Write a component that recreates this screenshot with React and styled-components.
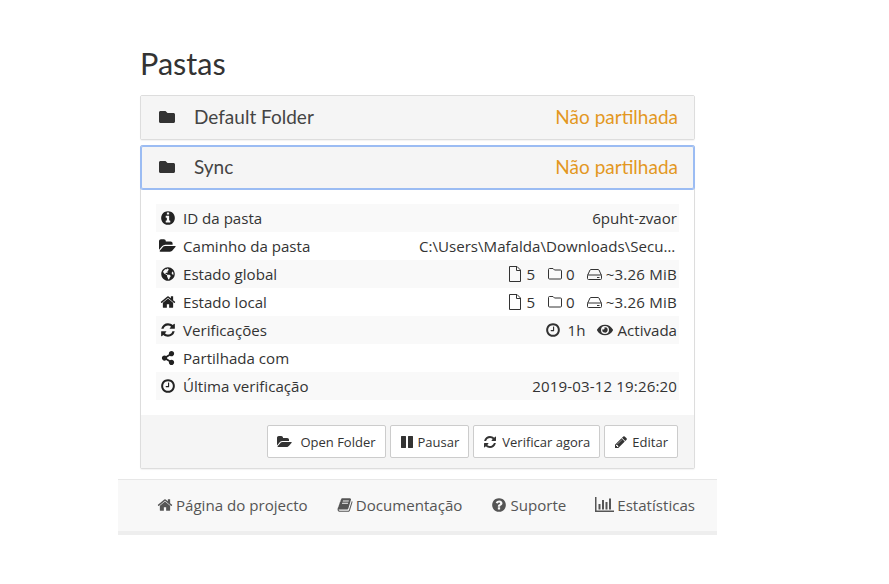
import React from "react";
import styled, { createGlobalStyle } from "styled-components";
import { FaFolder, FaGlobeAmericas, FaShareAlt, FaEye } from "react-icons/fa";

const Global = createGlobalStyle`
  html, body { margin: 0; padding: 0; background: #fff; }
  body { font-family: "Open Sans", "Noto Sans", sans-serif; color: #333; }
`;

const Page = styled.div`
  width: 599px;
  margin-left: 118px;
  padding-top: 46px;
`;
const Content = styled.div`
  padding: 0 22px 10px;
`;
const Title = styled.h1`
  margin: 0 0 13px;
  height: 36px;
  font: 400 30.6px/36px Lato, sans-serif;
  color: #333;
`;
const Panel = styled.section`
  border: 1px solid #ddd;
  border-radius: 2px;
  margin-bottom: 5px;
  box-shadow: 0 1px 1px rgba(0,0,0,.05);
  background: #fff;
  &:last-child { margin-bottom: 0; }
`;
const PanelHead = styled.div`
  display: flex;
  align-items: center;
  height: 43px;
  padding: 0 16px 2px 17px;
  box-sizing: border-box;
  background: #f5f5f5;
  border-radius: 2px;
  ${p => p.$open && "box-shadow: 0 0 0 1px #9bbcf3, inset 0 0 0 1px #9bbcf3;"}
`;
const FolderIcon = styled(FaFolder)`
  width: 18px;
  height: 16px;
  color: #333;
  margin-right: 18px;
  flex: none;
`;
const FolderName = styled.span`
  flex: 1;
  font: 400 19px Lato, sans-serif;
  color: #444;
`;
const Status = styled.span`
  font: 400 19px Lato, sans-serif;
  color: #e3981f;
`;
const PanelBody = styled.div`
  padding: 15px;
`;
const Row = styled.div`
  display: flex;
  align-items: center;
  justify-content: space-between;
  height: 28px;
  padding: 0 2px 0 3px;
  font-size: 15.1px;
  color: #333;
  background: ${p => (p.$odd ? "#f9f9f9" : "#fff")};
`;
const RowLabel = styled.span`
  display: flex;
  align-items: center;
  flex: none;
  white-space: nowrap;
`;
const RowIcon = styled.span`
  display: inline-flex;
  justify-content: center;
  width: 17px;
  margin-right: 7px;
  font-size: ${p => p.$small ? 14 : 16}px;
  color: #222;
`;
const RowValue = styled.span`
  display: flex;
  align-items: center;
  justify-content: flex-end;
  min-width: 0;
  white-space: nowrap;
  letter-spacing: ${p => p.$spaced ? "0.12px" : "0"};
`;
const Path = styled.span`
  display: block;
  width: 258px;
  overflow: hidden;
  text-overflow: ellipsis;
  white-space: nowrap;
`;
const Stat = styled.span`
  display: inline-flex;
  align-items: center;
  gap: ${p => p.$gap || 4}px;
  margin-left: ${p => p.$ml || 0}px;
  letter-spacing: ${p => p.$track || 0}px;
  svg { font-size: 16px; color: #333; flex: none; }
`;
const PanelFoot = styled.div`
  display: flex;
  justify-content: flex-end;
  gap: 4px;
  padding: 10px 16px 10px;
  background: #f5f5f5;
`;
const Button = styled.button`
  display: inline-flex;
  align-items: center;
  gap: ${p => p.$gap || 4}px;
  height: 33px;
  padding: 0 9px;
  background: #fff;
  border: 1px solid #ccc;
  border-radius: 2px;
  font-family: inherit;
  font-size: 13px;
  color: #333;
  svg { font-size: 14px; flex: none; }
`;
const Footer = styled.footer`
  display: flex;
  justify-content: flex-end;
  gap: 29px;
  align-items: center;
  height: 51px;
  padding: 0 22px 2px;
  box-sizing: content-box;
  height: 49px;
  background: #f8f8f8;
  border-top: 1px solid #e7e7e7;
  border-bottom: 4px solid #eee;
`;
const FootLink = styled.a`
  display: inline-flex;
  align-items: center;
  gap: 3px;
  font-size: 15.1px;
  color: #555;
  svg { font-size: 16px; flex: none; }
`;

const fa4 = {
  info: "M1152 1376v-160q0-14-9-23t-23-9h-96v-512q0-14-9-23t-23-9h-320q-14 0-23 9t-9 23v160q0 14 9 23t23 9h96v320h-96q-14 0-23 9t-9 23v160q0 14 9 23t23 9h448q14 0 23-9t9-23zm-128-896v-160q0-14-9-23t-23-9h-192q-14 0-23 9t-9 23v160q0 14 9 23t23 9h192q14 0 23-9t9-23zm640 416q0 209-103 385.5t-279.5 279.5-385.5 103-385.5-103-279.5-279.5-103-385.5 103-385.5 279.5-279.5 385.5-103 385.5 103 279.5 279.5 103 385.5z",
  open: "M1879 952q0 31-31 66l-336 396q-43 51-120.5 86.5t-143.5 35.5h-1088q-34 0-60.5-13t-26.5-43q0-31 31-66l336-396q43-51 120.5-86.5t143.5-35.5h1088q34 0 60.5 13t26.5 43zm-343-344v160h-832q-94 0-197 47.5t-164 119.5l-337 396-5 6q0-4-.5-12.5t-.5-12.5v-960q0-92 66-158t158-66h320q92 0 158 66t66 158v32h544q92 0 158 66t66 158z",
  home: "M1472 992v480q0 26-19 45t-45 19h-384v-384h-256v384h-384q-26 0-45-19t-19-45v-480q0-1 .5-3t.5-3l575-474 575 474q1 2 1 6zm223-69l-62 74q-8 9-21 11h-3q-13 0-21-7l-692-577-692 577q-12 8-24 7-13-2-21-11l-62-74q-8-10-7-23.5t11-21.5l719-599q32-26 76-26t76 26l244 204v-195q0-14 9-23t23-9h192q14 0 23 9t9 23v408l219 182q10 8 11 21.5t-7 23.5z",
  refresh: "M1639 1056q0 5-1 7-64 268-268 434.5t-478 166.5q-146 0-282.5-55t-243.5-157l-129 129q-19 19-45 19t-45-19-19-45v-448q0-26 19-45t45-19h448q26 0 45 19t19 45-19 45l-137 137q71 66 161 102t187 36q134 0 250-65t186-179q11-17 53-117 8-23 30-23h192q13 0 22.5 9.5t9.5 22.5zm25-800v448q0 26-19 45t-45 19h-448q-26 0-45-19t-19-45 19-45l138-138q-148-137-349-137-134 0-250 65t-186 179q-11 17-53 117-8 23-30 23h-199q-13 0-22.5-9.5t-9.5-22.5v-7q65-268 270-434.5t480-166.5q146 0 284 55.5t245 156.5l130-129q19-19 45-19t45 19 19 45z",
  clock: "M1024 544v448q0 14-9 23t-23 9h-320q-14 0-23-9t-9-23v-64q0-14 9-23t23-9h224v-352q0-14 9-23t23-9h64q14 0 23 9t9 23zm416 352q0-148-73-273t-198-198-273-73-273 73-198 198-73 273 73 273 198 198 273 73 273-73 198-198 73-273zm224 0q0 209-103 385.5t-279.5 279.5-385.5 103-385.5-103-279.5-279.5-103-385.5 103-385.5 279.5-279.5 385.5-103 385.5 103 279.5 279.5 103 385.5z",
  pause: "M1664 192v1408q0 26-19 45t-45 19h-512q-26 0-45-19t-19-45v-1408q0-26 19-45t45-19h512q26 0 45 19t19 45zm-896 0v1408q0 26-19 45t-45 19h-512q-26 0-45-19t-19-45v-1408q0-26 19-45t45-19h512q26 0 45 19t19 45z",
  pencil: "M491 1536l91-91-235-235-91 91v107h128v128h107zm523-928q0-22-22-22-10 0-17 7l-542 542q-7 7-7 17 0 22 22 22 10 0 17-7l542-542q7-7 7-17zm-54-192l416 416-832 832h-416v-416zm683 96q0 53-37 90l-166 166-416-416 166-165q36-38 90-38 53 0 91 38l235 234q37 39 37 91z",
  book: "M1703 478q40 57 18 129l-275 906q-19 64-76.5 107.5t-122.5 43.5h-923q-77 0-148.5-53.5t-99.5-131.5q-24-67-2-127 0-4 3-27t4-37q1-8-3-21.5t-3-19.5q2-11 8-21t16.5-23.5 16.5-23.5q23-38 45-91.5t30-91.5q3-10 .5-30t-.5-28q3-11 17-28t17-23q21-36 42-92t25-90q1-9-2.5-32t.5-28q4-13 22-30.5t22-22.5q19-26 42.5-84.5t27.5-96.5q1-8-3-25.5t-2-26.5q2-8 9-18t18-23 17-21q8-12 16.5-30.5t15-35 16-36 19.5-32 26.5-23.5 36-11.5 47.5 5.5l-1 3q38-9 51-9h761q74 0 114 56t18 130l-274 906q-36 119-71.5 153.5t-128.5 34.5h-869q-27 0-38 15-11 16-1 43 24 70 144 70h923q29 0 56-15.5t35-41.5l300-987q7-22 5-57 38 15 59 43zm-1064 2q-4 13 2 22.5t20 9.5h608q13 0 25.5-9.5t16.5-22.5l21-64q4-13-2-22.5t-20-9.5h-608q-13 0-25.5 9.5t-16.5 22.5zm-83 256q-4 13 2 22.5t20 9.5h608q13 0 25.5-9.5t16.5-22.5l21-64q4-13-2-22.5t-20-9.5h-608q-13 0-25.5 9.5t-16.5 22.5z",
  question: "M1024 1376v-192q0-14-9-23t-23-9h-192q-14 0-23 9t-9 23v192q0 14 9 23t23 9h192q14 0 23-9t9-23zm256-672q0-88-55.5-163t-138.5-116-170-41q-243 0-371 213-15 24 8 42l132 100q7 6 19 6 16 0 25-12 53-68 86-92 34-24 86-24 48 0 85.5 26t37.5 59q0 38-20 61t-68 45q-63 28-115.5 86.5t-52.5 125.5v36q0 14 9 23t23 9h192q14 0 23-9t9-23q0-19 21.5-49.5t54.5-49.5q32-18 49-28.5t46-35 44.5-48 28-60.5 12.5-81zm384 192q0 209-103 385.5t-279.5 279.5-385.5 103-385.5-103-279.5-279.5-103-385.5 103-385.5 279.5-279.5 385.5-103 385.5 103 279.5 279.5 103 385.5z",
};

const Glyph = ({ name, width = 1792 }) => (
  <svg width={`${width / 1792}em`} height="1em" viewBox={`0 0 ${width} 1792`} fill="currentColor">
    <path d={fa4[name]} />
  </svg>
);

const ChartIcon = () => (
  <svg width="19" height="15" viewBox="0 0 19 15" fill="currentColor">
    <rect x="0" y="0" width="1.5" height="15" />
    <rect x="0" y="13.5" width="19" height="1.5" />
    <rect x="3.5" y="7" width="2" height="5.5" />
    <rect x="7" y="3" width="2" height="9.5" />
    <rect x="10.5" y="5" width="2" height="7.5" />
    <rect x="14" y="1.5" width="2" height="11" />
  </svg>
);
const FileOutline = () => (
  <svg width="14" height="16" viewBox="0 0 14 16" fill="none" stroke="currentColor" strokeWidth="1">
    <path d="M1.5 .5h7.5l3.5 3.5v11.5h-11z" />
    <path d="M8.5 .5v4h4" />
  </svg>
);
const FolderOutline = () => (
  <svg width="14" height="12" viewBox="0 0 14 12" fill="none" stroke="currentColor" strokeWidth="1">
    <path d="M1.5 .5h3.5l1.5 1.5h6q1 0 1 1v7q0 1-1 1h-11q-1 0-1-1v-8.5q0-1 1-1z" />
  </svg>
);
const DriveOutline = () => (
  <svg width="15" height="11" viewBox="0 0 15 11" fill="none" stroke="currentColor" strokeWidth="1">
    <path d="M.5 6.5l2.5-5.5q.3-.5 1-.5h7q.7 0 1 .5l2.5 5.5v3q0 1-1 1h-12q-1 0-1-1z" />
    <path d="M.5 6h14" />
    <path d="M10 8.5h2.5" />
  </svg>
);

const Counts = () => (
  <>
    <Stat $gap={4}><FileOutline />5</Stat>
    <Stat $ml={13} $gap={4}><FolderOutline />0</Stat>
    <Stat $ml={12} $gap={4} $track={0.2}><DriveOutline />~3.26 MiB</Stat>
  </>
);

const rows = [
  { icon: <Glyph name="info" />, label: "ID da pasta", value: "6puht-zvaor" },
  { icon: <Glyph name="open" width={1920} />, label: "Caminho da pasta", value: <Path>{"C:\\Users\\Mafalda\\Downloads\\Security Camera Footage"}</Path> },
  { icon: <FaGlobeAmericas />, small: true, label: "Estado global", value: <Counts /> },
  { icon: <Glyph name="home" />, label: "Estado local", value: <Counts /> },
  {
    icon: <Glyph name="refresh" />, label: "Verificações",
    value: (
      <>
        <Stat $gap={7}><Glyph name="clock" />1h</Stat>
        <Stat $ml={12} $gap={4}><FaEye />Activada</Stat>
      </>
    ),
  },
  { icon: <FaShareAlt />, small: true, label: "Partilhada com", value: "" },
  { icon: <Glyph name="clock" />, label: "Última verificação", value: "2019-03-12 19:26:20", spaced: true },
];

export default function App() {
  return (
    <Page>
      <Global />
      <Content>
        <Title>Pastas</Title>
        <Panel>
          <PanelHead>
            <FolderIcon />
            <FolderName>Default Folder</FolderName>
            <Status>Não partilhada</Status>
          </PanelHead>
        </Panel>
        <Panel>
          <PanelHead $open>
            <FolderIcon />
            <FolderName>Sync</FolderName>
            <Status>Não partilhada</Status>
          </PanelHead>
          <PanelBody>
            {rows.map((r, i) => (
              <Row key={r.label} $odd={i % 2 === 0}>
                <RowLabel><RowIcon $small={r.small}>{r.icon}</RowIcon>{r.label}</RowLabel>
                <RowValue $spaced={r.spaced}>{r.value}</RowValue>
              </Row>
            ))}
          </PanelBody>
          <PanelFoot>
            <Button $gap={8}><Glyph name="open" width={1920} />Open Folder</Button>
            <Button><Glyph name="pause" />Pausar</Button>
            <Button $gap={5}><Glyph name="refresh" />Verificar agora</Button>
            <Button><Glyph name="pencil" />Editar</Button>
          </PanelFoot>
        </Panel>
      </Content>
      <Footer>
        <FootLink><Glyph name="home" />Página do projecto</FootLink>
        <FootLink><Glyph name="book" />Documentação</FootLink>
        <FootLink><Glyph name="question" />Suporte</FootLink>
        <FootLink><ChartIcon />Estatísticas</FootLink>
      </Footer>
    </Page>
  );
}
